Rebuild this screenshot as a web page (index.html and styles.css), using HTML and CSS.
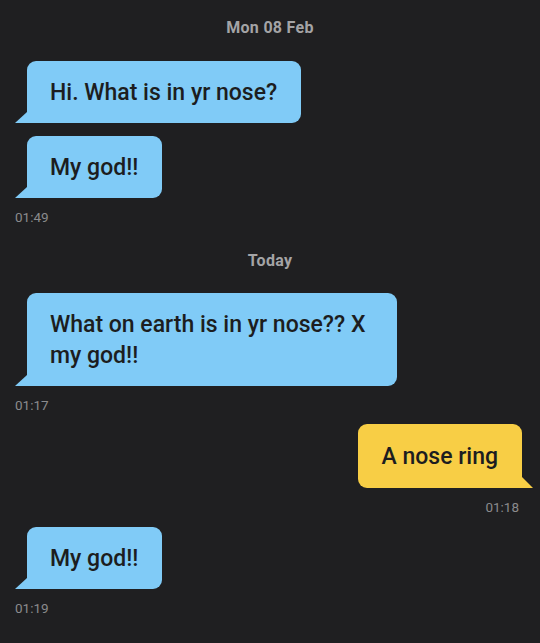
FILE: index.html
```html
<!DOCTYPE html>
<html>
<head>
<meta charset="utf-8">
<link rel="stylesheet" href="styles.css">
</head>
<body>
<div class="chat">
  <div class="date first">Mon 08 Feb</div>
  <div class="row in"><div class="bubble">Hi. What is in yr nose?</div></div>
  <div class="row in next"><div class="bubble">My god!!</div></div>
  <div class="time">01:49</div>
  <div class="date">Today</div>
  <div class="row in"><div class="bubble">What on earth is in yr nose?? X my god!!</div></div>
  <div class="time">01:17</div>
  <div class="row out"><div class="bubble">A nose ring</div></div>
  <div class="time right">01:18</div>
  <div class="row in"><div class="bubble">My god!!</div></div>
  <div class="time">01:19</div>
</div>
</body>
</html>
```
FILE: styles.css
```css
html, body {
  margin: 0;
  padding: 0;
  background: #1f1f21;
}
body {
  font-family: Roboto, "Liberation Sans", sans-serif;
  width: 540px;
  height: 643px;
  overflow: hidden;
}
.chat {
  display: flex;
  flex-direction: column;
  padding: 19px 7px 0 15px;
}
.date {
  text-align: center;
  color: #a4a4a6;
  font-weight: 700;
  font-size: 16px;
  line-height: 18px;
  letter-spacing: 0.3px;
  margin: 16px 8px 23px 0;
}
.date.first {
  margin-top: 0;
  margin-bottom: 24px;
}
.row {
  display: flex;
}
.row.in {
  justify-content: flex-start;
  padding-left: 12px;
}
.row.out {
  justify-content: flex-end;
  padding-right: 11px;
}
.row.next {
  margin-top: 13px;
}
.bubble {
  position: relative;
  max-width: 370px;
  box-sizing: border-box;
  padding: 16px 24px 15px 23px;
  font-size: 23px;
  line-height: 31px;
  font-weight: 500;
  color: #1c1d20;
  border-radius: 9px;
}
.in .bubble {
  background: #80cbf7;
  border-bottom-left-radius: 0;
}
.out .bubble {
  background: #f8ce45;
  border-bottom-right-radius: 0;
  padding-top: 17px;
  padding-bottom: 16px;
}
.in .bubble::before,
.out .bubble::before {
  content: "";
  position: absolute;
  bottom: 0;
  width: 12px;
  height: 11px;
  background: inherit;
}
.in .bubble::before {
  left: -12px;
  clip-path: polygon(100% 0, 100% 100%, 0 100%);
}
.out .bubble::before {
  right: -11px;
  width: 11px;
  clip-path: polygon(0 0, 100% 100%, 0 100%);
}
.time {
  color: #8b8b8d;
  font-size: 13.5px;
  line-height: 16px;
  margin: 11px 0 11px 0;
}
.time.right {
  text-align: right;
  margin-right: 14px;
  margin-bottom: 12px;
}
```
